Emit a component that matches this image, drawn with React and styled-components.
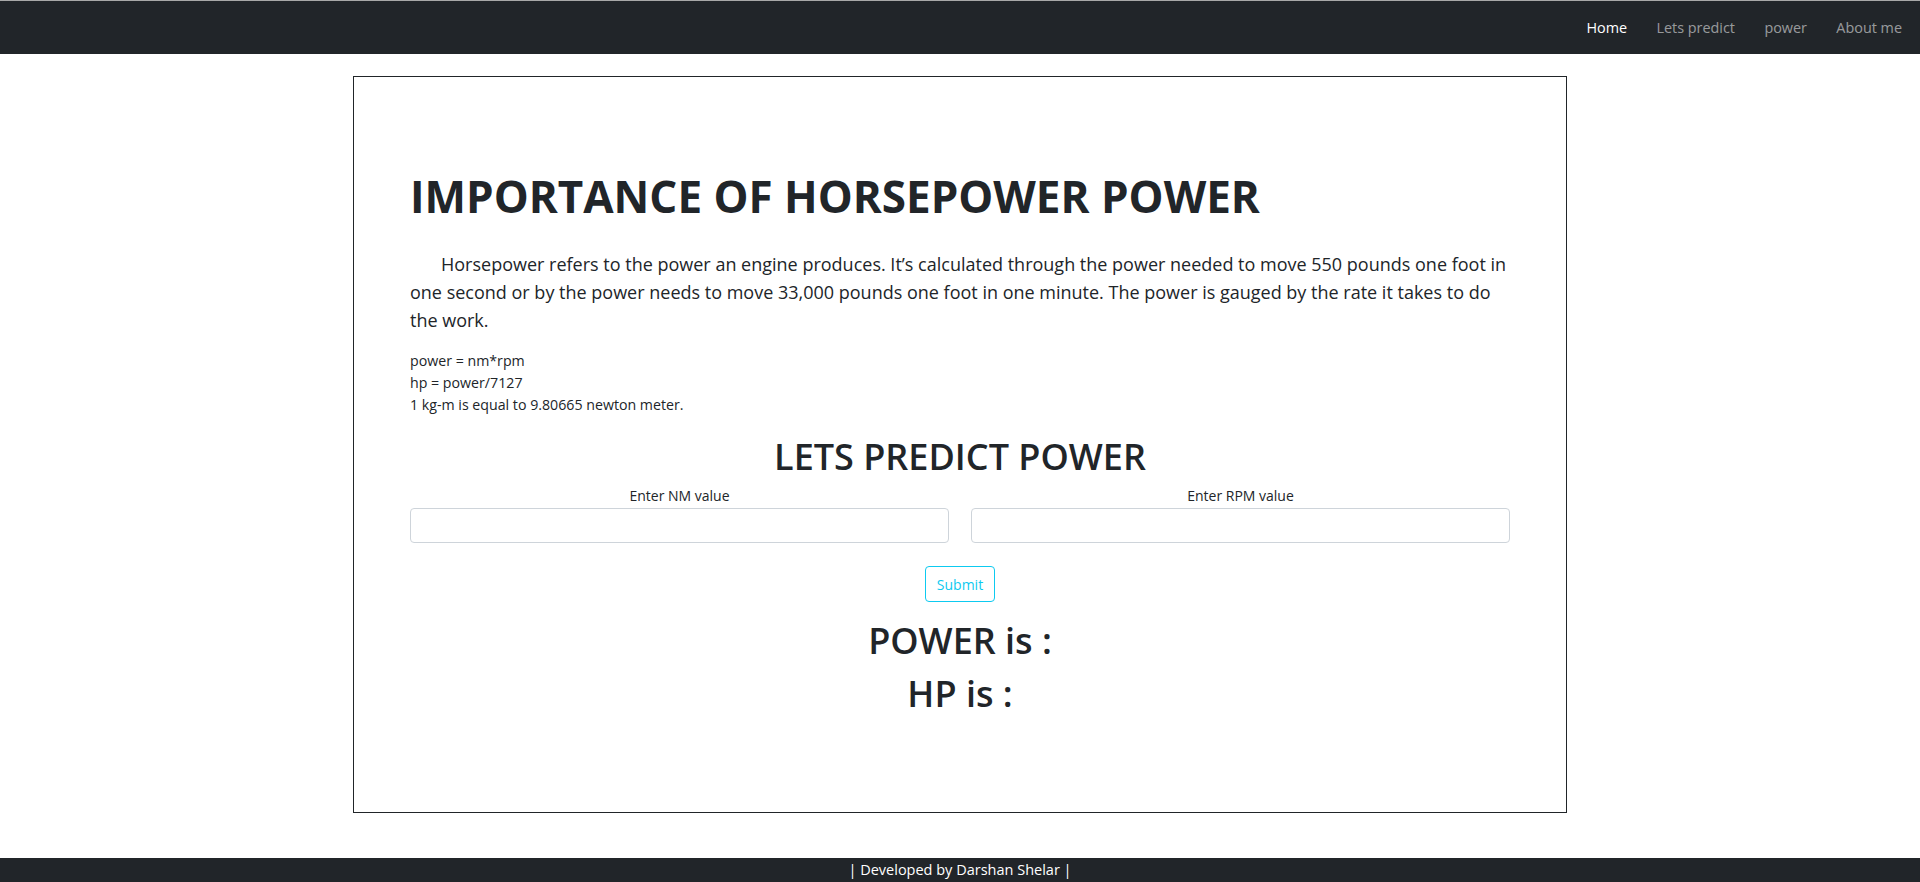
import React from 'react';
import styled, { createGlobalStyle } from 'styled-components';

const GlobalStyle = createGlobalStyle`
  * { box-sizing: border-box; }
  body {
    margin: 0;
    font-family: "Open Sans", "Noto Sans", sans-serif;
    color: #212529;
    background: #fff;
  }
`;

const NavBar = styled.nav`
  height: 54px;
  background: #212529;
  border-top: 1px solid #a8a8a8;
  display: flex;
  align-items: center;
  justify-content: flex-end;
  padding-right: 18px;
`;

const NavLink = styled.a`
  font-size: 14.4px;
  color: ${props => (props.active ? '#fff' : 'rgba(255, 255, 255, 0.55)')};
  text-decoration: none;
  padding: 0 14.7px;
  &:last-child { padding-right: 0; }
`;

const Main = styled.main`
  padding-top: 22px;
  display: flex;
  justify-content: center;
`;

const Card = styled.section`
  width: 1214px;
  height: 737px;
  border: 1px solid #212529;
  padding: 93px 56px 0;
`;

const Title = styled.h1`
  font-size: 44px;
  font-weight: 700;
  line-height: 1.2;
  margin: 0 0 27px;
`;

const Lead = styled.p`
  font-size: 18px;
  font-weight: 400;
  line-height: 28.2px;
  text-indent: 31px;
  margin: 0 0 16px;
`;

const Formula = styled.p`
  font-size: 14.2px;
  line-height: 22px;
  margin: 0 0 17px;
`;

const SubTitle = styled.h2`
  font-size: 36px;
  font-weight: 600;
  line-height: 48px;
  text-align: center;
  margin: 0 0 4px;
`;

const FormRow = styled.div`
  display: grid;
  grid-template-columns: 1fr 1fr;
  gap: 22px;
`;

const Field = styled.div`
  display: flex;
  flex-direction: column;
  align-items: stretch;
`;

const Label = styled.label`
  font-size: 14px;
  line-height: 22px;
  text-align: center;
  margin-bottom: 1px;
`;

const Input = styled.input`
  height: 35px;
  border: 1px solid #ced4da;
  border-radius: 4px;
  padding: 0 12px;
  font-size: 15px;
  font-family: inherit;
`;

const ButtonRow = styled.div`
  display: flex;
  justify-content: center;
  margin-top: 23px;
`;

const SubmitButton = styled.button`
  height: 36px;
  padding: 0 11px;
  background: #fff;
  color: #0dcaf0;
  border: 1px solid #0dcaf0;
  border-radius: 4px;
  font-size: 14px;
  font-family: inherit;
  cursor: pointer;
`;

const Result = styled.h2`
  font-size: 36px;
  font-weight: 600;
  line-height: 48px;
  text-align: center;
  margin: ${props => (props.first ? '15px' : '5px')} 0 0;
`;

const Footer = styled.footer`
  position: fixed;
  left: 0;
  right: 0;
  bottom: 0;
  height: 24px;
  background: #212529;
  color: #fff;
  font-size: 14.5px;
  line-height: 24px;
  text-align: center;
`;

export default function App() {
  return (
    <>
      <GlobalStyle />
      <NavBar>
        <NavLink href="#" active>Home</NavLink>
        <NavLink href="#">Lets predict</NavLink>
        <NavLink href="#">power</NavLink>
        <NavLink href="#">About me</NavLink>
      </NavBar>

      <Main>
        <Card>
          <Title>IMPORTANCE OF HORSEPOWER POWER</Title>
          <Lead>
            Horsepower refers to the power an engine produces. It’s calculated through the power needed to move
            550 pounds one foot in one second or by the power needs to move 33,000 pounds one foot in one minute.
            The power is gauged by the rate it takes to do the work.
          </Lead>
          <Formula>
            power = nm*rpm<br />
            hp = power/7127<br />
            1 kg-m is equal to 9.80665 newton meter.
          </Formula>

          <SubTitle>LETS PREDICT POWER</SubTitle>
          <FormRow>
            <Field>
              <Label>Enter NM value</Label>
              <Input type="text" />
            </Field>
            <Field>
              <Label>Enter RPM value</Label>
              <Input type="text" />
            </Field>
          </FormRow>
          <ButtonRow>
            <SubmitButton>Submit</SubmitButton>
          </ButtonRow>

          <Result first>POWER is :</Result>
          <Result>HP is :</Result>
        </Card>
      </Main>

      <Footer>| Developed by Darshan Shelar |</Footer>
    </>
  );
}
